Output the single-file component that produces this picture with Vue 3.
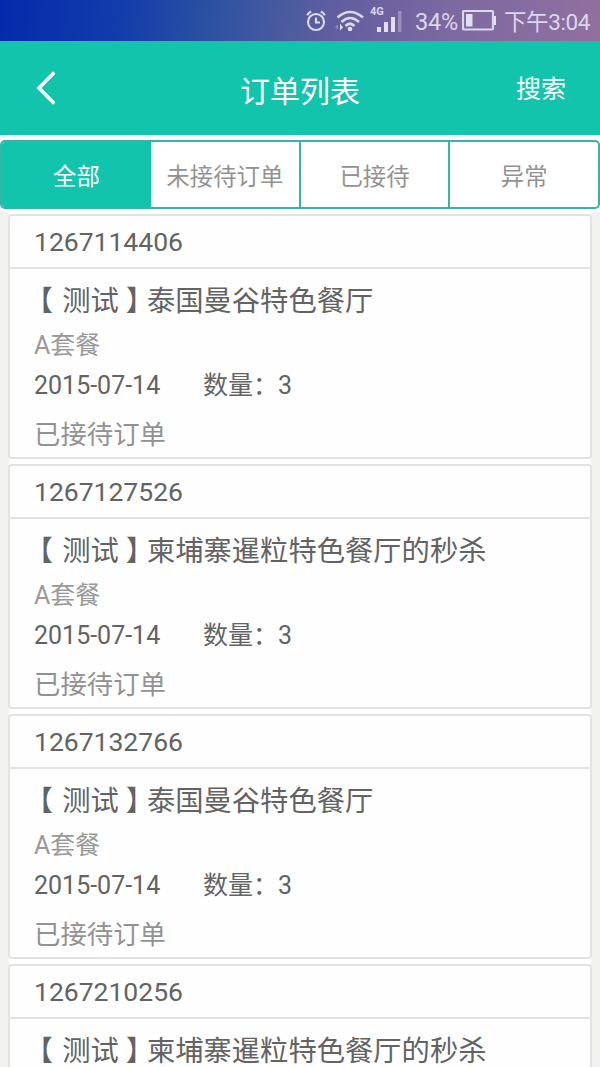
<template>
  <div class="page">
    <!-- 状态栏 -->
    <div class="status-bar">
      <svg class="alarm" width="20" height="22" viewBox="0 0 20 22">
        <circle cx="10" cy="12" r="8" />
        <path d="M10 7.5v5h4M1.2 5.2Q2.5 2.5 5.2 1.5M18.8 5.2Q17.5 2.5 14.8 1.5" />
      </svg>
      <svg class="wifi" width="30" height="22" viewBox="0 0 30 22">
        <path d="M2.5 7.5Q15 -3.5 28 7.5M6.5 12Q15 4 24 12M10.5 16Q15 11.5 19.5 16" />
        <circle class="fill" cx="15" cy="19" r="2.3" />
        <path class="fill" d="M5 13.5l3 4-3 3z" />
        <path class="fill dim" d="M3 14.5v5l-3-2.5z" />
      </svg>
      <div class="signal">
        <span class="net">4G</span>
        <svg width="26" height="22" viewBox="0 0 26 22">
          <path class="fill" d="M1 17h4v5H1zM8 12h4v10H8zM15 7h4v15h-4z" />
          <path class="fill dim" d="M22 1h3.5v21H22z" />
        </svg>
      </div>
      <span class="percent">34%</span>
      <svg class="battery" width="34" height="21" viewBox="0 0 34 21">
        <rect x="1" y="1" width="30" height="18.5" rx="1" />
        <path class="fill" d="M4 4h6.5v12.5H4zM32 6h2v9h-2z" />
      </svg>
      <span class="time">下午3:04</span>
    </div>

    <!-- 标题栏 -->
    <div class="header">
      <svg class="back" width="20" height="34" viewBox="0 0 20 34">
        <path d="M17.2 2.5L3 17L17.2 31.5" />
      </svg>
      <h1>订单列表</h1>
      <span class="search">搜索</span>
    </div>

    <!-- 切换标签 -->
    <div class="tabs">
      <div
        v-for="(tab, index) in tabs"
        :key="tab"
        class="tab"
        :class="{ active: index === current }"
        @click="current = index"
      >{{ tab }}</div>
    </div>

    <!-- 订单列表 -->
    <div class="list">
      <div v-for="order in orders" :key="order.no" class="card">
        <div class="no">{{ order.no }}</div>
        <div class="body">
          <div class="name"><span class="left">【</span>测试<span class="right">】</span>{{ order.name }}</div>
          <div class="meal">A套餐</div>
          <div class="info">
            <span class="date">2015-07-14</span>
            <span>数量：3</span>
          </div>
          <div class="state">已接待订单</div>
        </div>
      </div>
    </div>
  </div>
</template>

<script setup>
import { ref } from 'vue';

// 当前选中的标签
const current = ref(0);
const tabs = ['全部', '未接待订单', '已接待', '异常'];

const orders = ref([
  { no: '1267114406', name: '泰国曼谷特色餐厅' },
  { no: '1267127526', name: '柬埔寨暹粒特色餐厅的秒杀' },
  { no: '1267132766', name: '泰国曼谷特色餐厅' },
  { no: '1267210256', name: '柬埔寨暹粒特色餐厅的秒杀' },
]);
</script>

<style>
body {
  margin: 0;
  overflow: hidden;
}
</style>

<style scoped>
.page {
  width: 600px;
  height: 1067px;
  overflow: hidden;
  background: #fff;
  color: #636363;
  font-family: Roboto, "Noto Sans CJK SC", sans-serif;
  white-space: nowrap;
}

.page div {
  box-sizing: border-box;
}

/* 状态栏 */
.status-bar {
  display: flex;
  align-items: center;
  height: 41px;
  padding-left: 306px;
  background: linear-gradient(97deg, #0529ac 0%, #123cab 20%, #2a50a2 34%, #4c5b9f 48%, #625ea0 56%, #7c699f 75%, #91709f 100%);
  color: #dcd6ee;
}

.status-bar svg {
  flex: none;
  fill: none;
  stroke: #dcd6ee;
  stroke-width: 2.2;
}

.status-bar svg .fill {
  fill: #e4def4;
  stroke: none;
}

.status-bar svg .dim {
  opacity: 0.35;
}

.status-bar .wifi {
  margin-left: 9px;
  stroke-width: 2.6;
}

.signal {
  display: flex;
  flex-direction: column;
  align-items: flex-end;
  width: 32px;
  margin-left: 5px;
}

.net {
  align-self: flex-start;
  height: 4px;
  margin-top: -4px;
  font-size: 11px;
  font-weight: bold;
  line-height: 12px;
}

.percent {
  margin: 3px 0 0 13px;
  width: 44px;
  font-size: 23.5px;
  letter-spacing: -0.2px;
}

.battery {
  margin-left: 3px;
}

.time {
  margin: 2px 0 0 8px;
  font-size: 22.5px;
  line-height: 30px;
  letter-spacing: -0.4px;
}

/* 标题栏 */
.header {
  display: grid;
  grid-template-columns: 100px 1fr 100px;
  align-items: center;
  height: 94px;
  background: #13c4ad;
  color: #fff;
}

.back {
  margin: 0 0 0 36px;
  fill: none;
  stroke: #fff;
  stroke-width: 3.6;
  stroke-linecap: round;
}

.header h1 {
  margin: 7px 0 0;
  font-size: 30px;
  font-weight: normal;
  line-height: 40px;
  text-align: center;
}

.search {
  margin-top: 3px;
  padding-left: 16px;
  font-size: 25px;
  line-height: 36px;
}

/* 切换标签 */
.tabs {
  display: flex;
  height: 69px;
  margin-top: 5px;
  border: 2px solid #35b5a5;
  border-radius: 5px;
  overflow: hidden;
}

.tab {
  flex: 1;
  color: #929292;
  font-size: 23.4px;
  line-height: 71px;
  text-align: center;
}

.tab + .tab {
  border-left: 2px solid #35b5a5;
}

.tab.active {
  margin: -2px 0 -2px -2px;
  padding-left: 2px;
  flex: 0 0 151px;
  background: #13c4ad;
  color: #fff;
  line-height: 75px;
}

.tab.active + .tab {
  border-left: 0;
}

/* 订单列表 */
.list {
  display: flex;
  flex-direction: column;
  gap: 5px;
  margin-top: 3px;
  padding: 2px 8px 0;
  background: linear-gradient(90deg, #f2f2f1 9px, #fff 9px, #fff 591px, #f2f2f1 591px);
}

.card {
  flex: none;
  height: 245px;
  border: 2px solid #e3e3e3;
  border-radius: 4px;
  background: #fefefe;
}

.no {
  height: 53px;
  padding-left: 24px;
  border-bottom: 2px solid #e3e3e3;
  font-size: 26.5px;
  line-height: 51px;
}

.body {
  padding: 11px 0 0 24px;
}

.name {
  height: 43px;
  font-size: 28.3px;
  line-height: 43px;
}

/* 括号取半宽字形，两侧留白 */
.name .left,
.name .right {
  font-feature-settings: "halt";
}

.name .left {
  margin: 0 9px 0 5px;
}

.name .right {
  margin: 0 7px;
}

.meal {
  height: 43px;
  color: #999;
  font-size: 25px;
  line-height: 45px;
}

.info {
  display: flex;
  height: 38px;
  font-size: 25px;
  line-height: 39px;
}

.date {
  width: 169px;
}

.state {
  height: 52px;
  color: #929292;
  font-size: 26.4px;
  line-height: 62px;
}
</style>
